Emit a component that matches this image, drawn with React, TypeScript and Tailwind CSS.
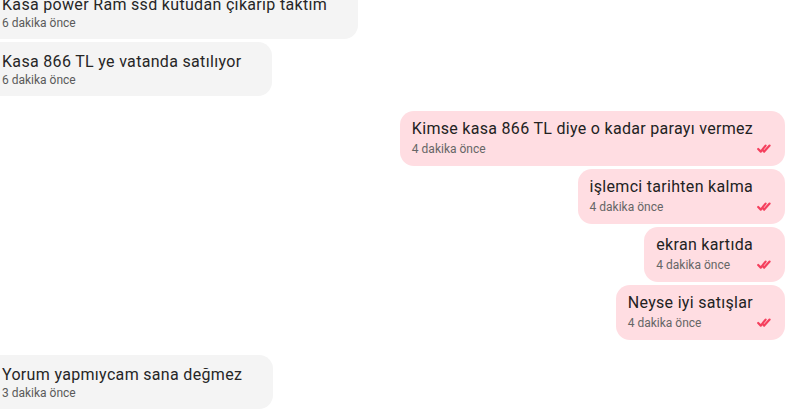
import React from "react";

type Msg = { text: string; time: string };

const FIRST_LEFT: Msg[] = [
	{ text: "Kasa power Ram ssd kutudan çıkarıp taktım", time: "6 dakika önce" },
	{ text: "Kasa 866 TL ye vatanda satılıyor", time: "6 dakika önce" },
];

const MINE: Msg[] = [
	{ text: "Kimse kasa 866 TL diye o kadar parayı vermez", time: "4 dakika önce" },
	{ text: "işlemci tarihten kalma", time: "4 dakika önce" },
	{ text: "ekran kartıda", time: "4 dakika önce" },
	{ text: "Neyse iyi satışlar", time: "4 dakika önce" },
];

const LAST_LEFT: Msg[] = [{ text: "Yorum yapmıycam sana değmez", time: "3 dakika önce" }];

function DoubleCheck() {
	return (
		<svg width="14" height="9" viewBox="0 0 14 9" fill="none" className="mb-[4px] ml-[4px] shrink-0">
			<path d="M1.2 5 L3.8 7.6 L8.6 1.6" stroke="#f5405e" strokeWidth="2.2" strokeLinecap="round" strokeLinejoin="round" />
			<path d="M6.2 6.6 L7.2 7.6 L12.6 1.6" stroke="#f5405e" strokeWidth="2.2" strokeLinecap="round" strokeLinejoin="round" />
		</svg>
	);
}

function TheirBubble({ msg }: { msg: Msg }) {
	return (
		<div className="rounded-r-[14px] bg-[#f4f4f4] pl-[2px] pr-[31px] pt-[10px] pb-[8px]">
			<div className="text-[16px] leading-5 tracking-[0.32px] text-[#262626]">{msg.text}</div>
			<div className="text-[12px] leading-4 text-[#5a5a5a]">{msg.time}</div>
		</div>
	);
}

function MyBubble({ msg }: { msg: Msg }) {
	return (
		<div className="mr-[6px] flex items-end rounded-[14px] bg-[#ffdde2] pl-[12px] pr-[14px] pt-[7px] pb-[9px]">
			<div className="flex flex-col">
				<div className="text-[16px] leading-[22px] tracking-[0.3px] text-[#222]">{msg.text}</div>
				<div className="mt-[1px] text-[12px] leading-4 text-[#666]">{msg.time}</div>
			</div>
			<DoubleCheck />
		</div>
	);
}

export default function App() {
	return (
		<div className="h-[414px] w-[791px] overflow-hidden bg-white font-['Roboto',sans-serif]">
			<div className="-mt-[15px] flex flex-col items-start gap-[3px]">
				{FIRST_LEFT.map((m, i) => (
					<TheirBubble key={i} msg={m} />
				))}
			</div>
			<div className="mt-[15px] flex flex-col items-end gap-[3px]">
				{MINE.map((m, i) => (
					<MyBubble key={i} msg={m} />
				))}
			</div>
			<div className="mt-[15px] flex flex-col items-start gap-[3px]">
				{LAST_LEFT.map((m, i) => (
					<TheirBubble key={i} msg={m} />
				))}
			</div>
		</div>
	);
}
